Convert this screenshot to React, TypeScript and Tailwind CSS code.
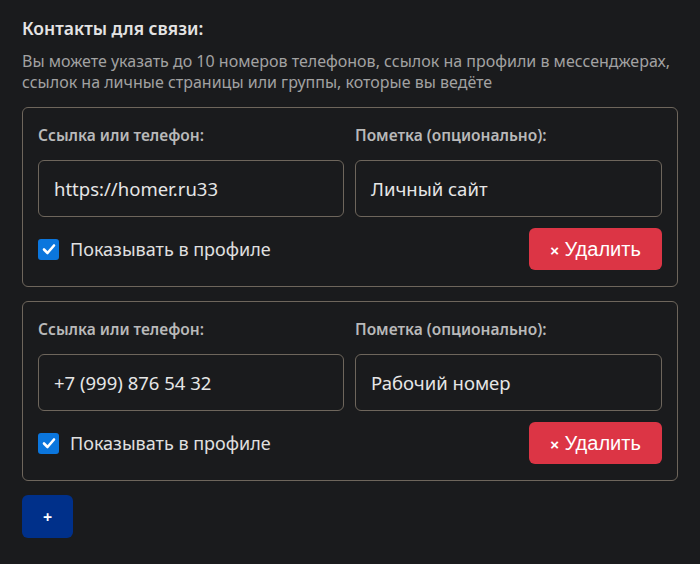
import React from 'react';

interface Contact {
  link: string;
  note: string;
  visible: boolean;
}

const contacts: Contact[] = [
  { link: 'https://homer.ru33', note: 'Личный сайт', visible: true },
  { link: '+7 (999) 876 54 32', note: 'Рабочий номер', visible: true },
];

const Checkbox = ({ checked }: { checked: boolean }) => (
  <span className="flex h-[21px] w-[21px] items-center justify-center rounded-[3px] bg-[#0b76dd]">
    {checked && (
      <svg width="14" height="14" viewBox="0 0 14 14" fill="none">
        <path d="M2 7.5L5.5 11L12 3.5" stroke="#fff" strokeWidth="2.6" strokeLinecap="round" strokeLinejoin="round" />
      </svg>
    )}
  </span>
);

const ContactCard = ({ contact }: { contact: Contact }) => (
  <div className="rounded-[6px] border border-[#6e665c] px-[15px] pt-[15px] pb-[16px]">
    <div className="grid grid-cols-[306px_1fr] gap-x-[11px]">
      <div>
        <div className="text-[15.5px] font-semibold leading-[25px] text-[#b9b9b9]">Ссылка или телефон:</div>
        <div className="mt-[12px] flex h-[57px] items-center rounded-[6px] border border-[#6e665c] px-[15px] text-[18.5px] text-[#e6e6e6]">
          {contact.link}
        </div>
      </div>
      <div>
        <div className="text-[15.5px] font-semibold leading-[25px] text-[#b9b9b9]">Пометка (опционально):</div>
        <div className="mt-[12px] flex h-[57px] items-center rounded-[6px] border border-[#6e665c] px-[15px] text-[18.5px] text-[#e6e6e6]">
          {contact.note}
        </div>
      </div>
    </div>
    <div className="mt-[11px] flex items-center justify-between">
      <label className="flex items-center gap-[11px] text-[18px] text-[#e0e0e0]">
        <Checkbox checked={contact.visible} />
        Показывать в профиле
      </label>
      <button className="h-[42px] w-[133px] rounded-[6px] bg-[#dc3545] text-[20px] text-white font-['Liberation_Sans',sans-serif]">
        <span className="text-[15px] font-bold">×</span> Удалить
      </button>
    </div>
  </div>
);

export default function App() {
  return (
    <div className="min-h-[564px] w-full bg-[#1a1b1d] px-[22px] pt-[14px] font-['Noto_Sans','Open_Sans',sans-serif]">
      <h2 className="text-[17.5px] font-semibold leading-[28px] text-[#e4e4e4]">Контакты для связи:</h2>
      <p className="mt-[9px] text-[16px] leading-[21px] text-[#a2a2a2]">
        Вы можете указать до 10 номеров телефонов, ссылок на профили в мессенджерах, ссылок на личные страницы или группы, которые вы ведёте
      </p>
      <div className="mt-[14px] flex flex-col gap-[14px]">
        {contacts.map((c, i) => (
          <ContactCard key={i} contact={c} />
        ))}
      </div>
      <button className="mt-[14px] flex h-[43px] w-[51px] items-center justify-center rounded-[6px] bg-[#00308a] text-[16px] font-bold text-white">
        +
      </button>
    </div>
  );
}
